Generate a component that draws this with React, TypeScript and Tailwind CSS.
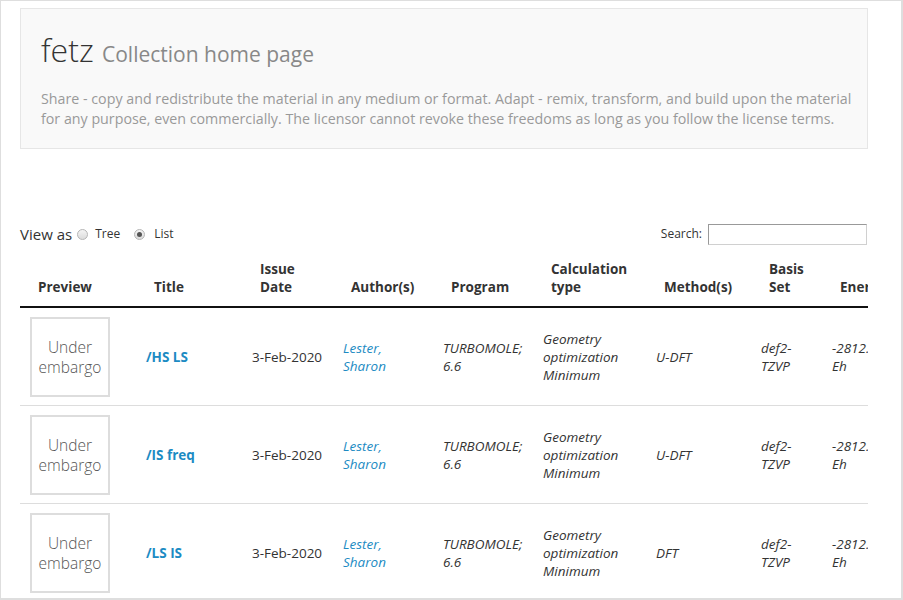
import React from 'react';

const rows = [
    { title: '/HS LS', method: 'U-DFT' },
    { title: '/IS freq', method: 'U-DFT' },
    { title: '/LS IS', method: 'DFT' },
];

const Radio = ({ checked }: { checked?: boolean }) => (
    <span className="inline-flex h-[11px] w-[11px] items-center justify-center rounded-full border border-[#b5b5b5] bg-gradient-to-b from-[#f4f4f4] to-[#dcdcdc]">
        {checked && <span className="h-[5px] w-[5px] rounded-full bg-[#555]" />}
    </span>
);

export default function App() {
    return (
        <div className="h-[600px] w-[903px] overflow-hidden border-t border-l border-r-2 border-b-2 border-[#dedede] bg-white font-['Open_Sans',sans-serif] text-[#333]">
            <div className="w-[867px] pl-[19px]">
                {/* Collection header */}
                <div className="mt-[7px] h-[141px] w-[848px] border border-[#e6e6e6] bg-[#f9f9f9] pl-[20px] pr-[8px] pt-[21px]">
                    <h1 className="text-[32px] font-light leading-[40px] text-[#333]">
                        fetz <small className="text-[21px] font-normal text-[#888]">Collection home page</small>
                    </h1>
                    <p className="mt-[15px] text-[14.25px] leading-[20px] text-[#999]">
                        Share - copy and redistribute the material in any medium or format. Adapt - remix, transform, and build upon the material for any purpose, even commercially. The licensor cannot revoke these freedoms as long as you follow the license terms.
                    </p>
                </div>

                {/* View toggle + search */}
                <div className="mt-[74px] flex h-[22px] w-[847px] items-center justify-between">
                    <div className="flex items-center">
                        <span className="mr-[5px] text-[15px]">View as</span>
                        <Radio />
                        <span className="ml-[7px] mr-[14px] text-[12px]">Tree</span>
                        <Radio checked />
                        <span className="ml-[9px] text-[12px]">List</span>
                    </div>
                    <div className="flex items-center text-[12px]">
                        <span className="mr-[6px]">Search:</span>
                        <input className="h-[21px] w-[159px] border border-[#d0d0d0] border-t-[#999] border-l-[#999] bg-white" />
                    </div>
                </div>

                {/* Results table */}
                <div className="mt-[15px] w-[848px] overflow-hidden">
                    <table className="w-[940px] table-fixed border-collapse">
                        <colgroup>
                            <col className="w-[116px]" />
                            <col className="w-[106px]" />
                            <col className="w-[91px]" />
                            <col className="w-[100px]" />
                            <col className="w-[100px]" />
                            <col className="w-[113px]" />
                            <col className="w-[105px]" />
                            <col className="w-[71px]" />
                            <col className="w-[138px]" />
                        </colgroup>
                        <thead>
                            <tr className="border-b-2 border-[#111] text-left align-bottom text-[13.5px] font-bold leading-[18px]">
                                <th className="pl-[18px] pb-[10px]">Preview</th>
                                <th className="pl-[18px] pb-[10px]">Title</th>
                                <th className="pl-[18px] pb-[10px]">Issue<br />Date</th>
                                <th className="pl-[18px] pb-[10px]">Author(s)</th>
                                <th className="pl-[18px] pb-[10px]">Program</th>
                                <th className="pl-[18px] pb-[10px]">Calculation<br />type</th>
                                <th className="pl-[18px] pb-[10px]">Method(s)</th>
                                <th className="pl-[18px] pb-[10px]">Basis<br />Set</th>
                                <th className="whitespace-nowrap pl-[18px] pb-[10px]">Energy</th>
                            </tr>
                        </thead>
                        <tbody>
                            {rows.map((r) => (
                                <tr key={r.title} className="border-b border-[#ddd] align-middle text-[13.5px] leading-[18px]">
                                    <td className="pl-[10px] pt-[9px] pb-[8px]">
                                        <div className="flex h-[80px] w-[80px] items-center justify-center border-2 border-[#ddd] text-center text-[15.5px] font-light leading-[20px] text-[#555]">
                                            Under<br />embargo
                                        </div>
                                    </td>
                                    <td className="pl-[10px] font-bold text-[#1c8bc3]">{r.title}</td>
                                    <td className="pl-[10px]">3-Feb-2020</td>
                                    <td className="pl-[10px] italic text-[#1c8bc3]">Lester,<br />Sharon</td>
                                    <td className="pl-[10px] italic">TURBOMOLE;<br />6.6</td>
                                    <td className="pl-[10px] italic">Geometry<br />optimization<br />Minimum</td>
                                    <td className="pl-[10px] italic">{r.method}</td>
                                    <td className="pl-[10px] italic">def2-<br />TZVP</td>
                                    <td className="whitespace-nowrap pl-[10px] italic">-2812.1234<br />Eh</td>
                                </tr>
                            ))}
                        </tbody>
                    </table>
                </div>
            </div>
        </div>
    );
}
